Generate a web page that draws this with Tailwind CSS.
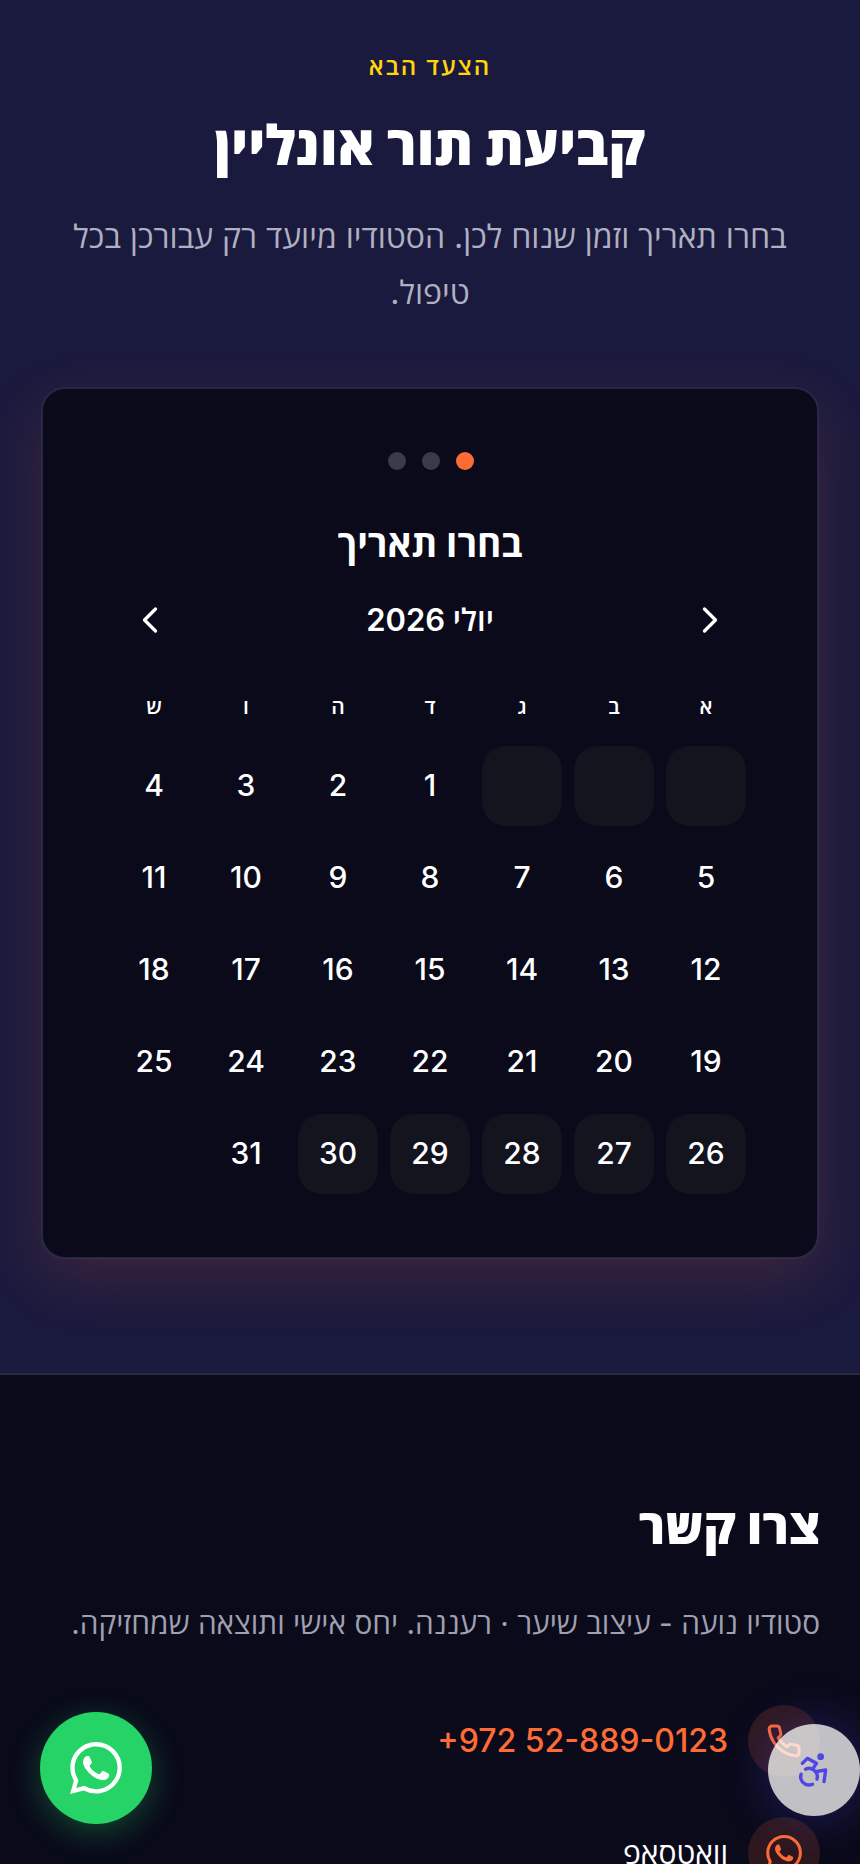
<!DOCTYPE html>
<html lang="he" dir="rtl">
<head>
    <meta charset="UTF-8">
    <meta name="viewport" content="width=device-width, initial-scale=1.0">
    <title>סטודיו נועה - קביעת תור</title>
    <script src="https://cdn.jsdelivr.net/npm/@tailwindcss/browser@4"></script>
</head>
<body class="h-[1864px] overflow-hidden bg-[#0a0a1a] font-['Inter','Open_Sans',sans-serif] text-white">
    <!-- קביעת תור -->
    <section class="h-[1373px] bg-[#1a1a3e] px-10 pt-[49px] text-center">
        <p class="text-[24px] leading-[36px] font-semibold tracking-[2px] text-[#ffd60a]">הצעד הבא</p>
        <h2 class="mt-[24px] text-[55px] leading-[72px] font-extrabold">קביעת תור אונליין</h2>
        <p class="mx-auto mt-[28px] w-[760px] text-[32px] leading-[56px] text-[#b0b0c0]">בחרו תאריך וזמן שנוח לכן. הסטודיו מיועד רק עבורכן בכל טיפול.</p>

        <div class="mx-auto mt-[66px] w-[778px] rounded-[24px] border-2 border-white/5 bg-[#0a0a1a] bg-clip-padding px-[71px] py-[63px] shadow-[0_20px_60px_rgba(255,107,53,0.15)]">
            <div class="flex justify-center gap-[16px] pl-[2px]">
                <span class="size-[18px] rounded-full bg-[#ff6b35]"></span>
                <span class="size-[18px] rounded-full bg-[#3a3a4a]"></span>
                <span class="size-[18px] rounded-full bg-[#3a3a4a]"></span>
            </div>
            <h3 class="mt-[50px] text-[37px] leading-[48px] font-bold">בחרו תאריך</h3>
            <div class="mt-[28px] flex h-[48px] items-center justify-between px-[14px]">
                <svg class="size-[44px]" viewBox="0 0 24 24" fill="none" stroke="currentColor" stroke-width="1.8" stroke-linecap="round" stroke-linejoin="round"><path d="m9 18 6-6-6-6"/></svg>
                <span class="text-[31px] leading-[48px] font-semibold">יולי 2026</span>
                <svg class="size-[44px]" viewBox="0 0 24 24" fill="none" stroke="currentColor" stroke-width="1.8" stroke-linecap="round" stroke-linejoin="round"><path d="m15 18-6-6 6-6"/></svg>
            </div>
            <div class="mt-[49px] grid grid-cols-7 gap-x-[12px] text-[21px] leading-[28px] font-semibold">
                <span>א</span><span>ב</span><span>ג</span><span>ד</span><span>ה</span><span>ו</span><span>ש</span>
            </div>
            <div class="mt-[25px] grid grid-cols-7 gap-[12px] text-[30px] font-medium [&>span]:pb-[2px]">
                <span class="h-[80px] rounded-[24px] bg-[#14141f]"></span>
                <span class="h-[80px] rounded-[24px] bg-[#14141f]"></span>
                <span class="h-[80px] rounded-[24px] bg-[#14141f]"></span>
                <span class="flex h-[80px] items-center justify-center">1</span>
                <span class="flex h-[80px] items-center justify-center">2</span>
                <span class="flex h-[80px] items-center justify-center">3</span>
                <span class="flex h-[80px] items-center justify-center">4</span>
                <span class="flex h-[80px] items-center justify-center">5</span>
                <span class="flex h-[80px] items-center justify-center">6</span>
                <span class="flex h-[80px] items-center justify-center">7</span>
                <span class="flex h-[80px] items-center justify-center">8</span>
                <span class="flex h-[80px] items-center justify-center">9</span>
                <span class="flex h-[80px] items-center justify-center">10</span>
                <span class="flex h-[80px] items-center justify-center">11</span>
                <span class="flex h-[80px] items-center justify-center">12</span>
                <span class="flex h-[80px] items-center justify-center">13</span>
                <span class="flex h-[80px] items-center justify-center">14</span>
                <span class="flex h-[80px] items-center justify-center">15</span>
                <span class="flex h-[80px] items-center justify-center">16</span>
                <span class="flex h-[80px] items-center justify-center">17</span>
                <span class="flex h-[80px] items-center justify-center">18</span>
                <span class="flex h-[80px] items-center justify-center">19</span>
                <span class="flex h-[80px] items-center justify-center">20</span>
                <span class="flex h-[80px] items-center justify-center">21</span>
                <span class="flex h-[80px] items-center justify-center">22</span>
                <span class="flex h-[80px] items-center justify-center">23</span>
                <span class="flex h-[80px] items-center justify-center">24</span>
                <span class="flex h-[80px] items-center justify-center">25</span>
                <span class="flex h-[80px] items-center justify-center rounded-[24px] bg-[#14141f]">26</span>
                <span class="flex h-[80px] items-center justify-center rounded-[24px] bg-[#14141f]">27</span>
                <span class="flex h-[80px] items-center justify-center rounded-[24px] bg-[#14141f]">28</span>
                <span class="flex h-[80px] items-center justify-center rounded-[24px] bg-[#14141f]">29</span>
                <span class="flex h-[80px] items-center justify-center rounded-[24px] bg-[#14141f]">30</span>
                <span class="flex h-[80px] items-center justify-center">31</span>
            </div>
        </div>
    </section>

    <!-- צור קשר -->
    <footer class="border-t-2 border-[#2a2a3e] bg-[#0a0a1a] px-10 pt-[116px]">
        <h2 class="text-[48.5px] leading-[72px] font-extrabold">צרו קשר</h2>
        <p class="mt-[36px] text-[29.8px] leading-[48px] text-[#a0a0b0]">סטודיו נועה - עיצוב שיער · רעננה. יחס אישי ותוצאה שמחזיקה.</p>
        <div class="mt-[58px] flex flex-col gap-[40px]">
            <div class="flex items-center gap-[20px]">
                <span class="flex size-[72px] items-center justify-center rounded-full bg-[#ff6b35]/15 text-[#ff6b35]">
                    <svg class="size-[36px]" viewBox="0 0 24 24" fill="none" stroke="currentColor" stroke-width="2" stroke-linecap="round" stroke-linejoin="round"><path d="M22 16.92v3a2 2 0 0 1-2.18 2 19.8 19.8 0 0 1-8.63-3.07 19.5 19.5 0 0 1-6-6 19.8 19.8 0 0 1-3.07-8.67A2 2 0 0 1 4.11 2h3a2 2 0 0 1 2 1.72c.13.96.36 1.9.7 2.81a2 2 0 0 1-.45 2.11L8.09 9.91a16 16 0 0 0 6 6l1.27-1.27a2 2 0 0 1 2.11-.45c.91.34 1.85.57 2.81.7A2 2 0 0 1 22 16.92z"/></svg>
                </span>
                <span dir="ltr" class="text-[32px] font-medium text-[#ff6b35]">+972 52-889-0123</span>
            </div>
            <div class="flex items-center gap-[20px]">
                <span class="flex size-[72px] items-center justify-center rounded-full bg-[#ff6b35]/15 text-[#ff6b35]">
                    <svg class="size-[36px]" viewBox="0 0 24 24" fill="currentColor"><path d="M17.47 14.38c-.3-.15-1.76-.87-2.03-.97-.27-.1-.47-.15-.67.15-.2.3-.77.97-.94 1.16-.17.2-.35.22-.64.08-.3-.15-1.26-.46-2.39-1.48-.88-.79-1.48-1.76-1.65-2.06-.17-.3-.02-.46.13-.6.13-.14.3-.35.45-.52.15-.17.2-.3.3-.5.1-.2.05-.37-.03-.52-.07-.15-.67-1.61-.91-2.2-.24-.58-.49-.5-.67-.51h-.57c-.2 0-.52.07-.79.37-.27.3-1.04 1.02-1.04 2.48s1.07 2.88 1.21 3.07c.15.2 2.1 3.2 5.08 4.49.71.3 1.26.49 1.69.62.71.23 1.36.2 1.87.12.57-.09 1.76-.72 2.01-1.41.25-.7.25-1.29.17-1.41-.07-.13-.27-.2-.57-.35zM12.05 21.79h-.01a9.87 9.87 0 0 1-5.03-1.38l-.36-.21-3.74.98 1-3.65-.24-.37a9.86 9.86 0 0 1-1.51-5.26c0-5.45 4.44-9.88 9.89-9.88 2.64 0 5.12 1.03 6.99 2.9a9.83 9.83 0 0 1 2.89 7c0 5.45-4.44 9.88-9.88 9.88zM20.46 3.49A11.82 11.82 0 0 0 12.05 0C5.5 0 .16 5.34.16 11.89c0 2.1.55 4.14 1.59 5.95L.06 24l6.3-1.65a11.88 11.88 0 0 0 5.68 1.45h.01c6.55 0 11.89-5.34 11.89-11.89a11.82 11.82 0 0 0-3.48-8.41z"/></svg>
                </span>
                <span class="text-[30px]">וואטסאפ</span>
            </div>
        </div>
    </footer>

    <!-- כפתורים צפים -->
    <a class="fixed bottom-[40px] left-[40px] flex size-[112px] items-center justify-center rounded-full bg-[#25d366] shadow-[0_8px_32px_rgba(37,211,102,0.3)]">
        <svg class="size-[52px]" viewBox="0 0 24 24" fill="white"><path d="M17.47 14.38c-.3-.15-1.76-.87-2.03-.97-.27-.1-.47-.15-.67.15-.2.3-.77.97-.94 1.16-.17.2-.35.22-.64.08-.3-.15-1.26-.46-2.39-1.48-.88-.79-1.48-1.76-1.65-2.06-.17-.3-.02-.46.13-.6.13-.14.3-.35.45-.52.15-.17.2-.3.3-.5.1-.2.05-.37-.03-.52-.07-.15-.67-1.61-.91-2.2-.24-.58-.49-.5-.67-.51h-.57c-.2 0-.52.07-.79.37-.27.3-1.04 1.02-1.04 2.48s1.07 2.88 1.21 3.07c.15.2 2.1 3.2 5.08 4.49.71.3 1.26.49 1.69.62.71.23 1.36.2 1.87.12.57-.09 1.76-.72 2.01-1.41.25-.7.25-1.29.17-1.41-.07-.13-.27-.2-.57-.35zM12.05 21.79h-.01a9.87 9.87 0 0 1-5.03-1.38l-.36-.21-3.74.98 1-3.65-.24-.37a9.86 9.86 0 0 1-1.51-5.26c0-5.45 4.44-9.88 9.89-9.88 2.64 0 5.12 1.03 6.99 2.9a9.83 9.83 0 0 1 2.89 7c0 5.45-4.44 9.88-9.88 9.88zM20.46 3.49A11.82 11.82 0 0 0 12.05 0C5.5 0 .16 5.34.16 11.89c0 2.1.55 4.14 1.59 5.95L.06 24l6.3-1.65a11.88 11.88 0 0 0 5.68 1.45h.01c6.55 0 11.89-5.34 11.89-11.89a11.82 11.82 0 0 0-3.48-8.41z"/></svg>
    </a>
    <button class="fixed right-0 bottom-[48px] flex size-[92px] items-center justify-center rounded-full bg-white/75 text-[#4f46e5] shadow-[0_0_48px_rgba(79,70,229,0.35)]">
        <svg class="size-[40px]" viewBox="0 0 24 24" fill="none" stroke="currentColor" stroke-width="2" stroke-linecap="round" stroke-linejoin="round"><circle cx="16" cy="4" r="1" fill="currentColor"/><path d="m18 19 1-7-6 1"/><path d="m5 8 3-3 5.5 3-2.36 3.5"/><path d="M4.24 14.5a5 5 0 0 0 6.88 6"/><path d="M13.76 17.5a5 5 0 0 0-6.88-6"/></svg>
    </button>
</body>
</html>
